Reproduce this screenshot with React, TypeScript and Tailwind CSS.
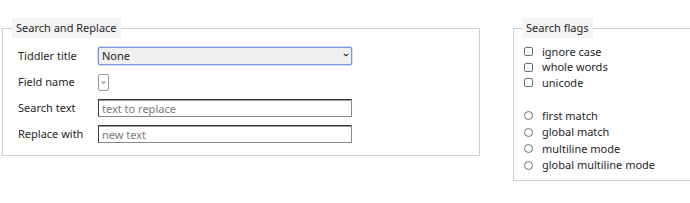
import React from "react";

const rows = ["first match", "global match", "multiline mode", "global multiline mode"];
const checks = ["ignore case", "whole words", "unicode"];

function Chevron({ className }: { className: string }) {
    return (
        <svg viewBox="0 0 8 5" className={className} fill="none">
            <path d="M1 1l3 2.6L7 1" stroke="#222" strokeWidth="1.4" />
        </svg>
    );
}

export default function App() {
    return (
        <div className="w-full h-[203px] overflow-hidden bg-white font-['Noto_Sans',sans-serif] text-[11px] text-[#262626]">
            <div className="flex items-start pt-[18px] pl-[2px]">
                {/* search and replace */}
                <fieldset className="w-[478px] shrink-0 border border-[#cfcfcf] pb-[8px]">
                    <legend className="ml-[9px] px-[4px] leading-5 bg-[#f4f4f4]">Search and Replace</legend>
                    <div className="grid grid-cols-[80px_254px] auto-rows-[26px] items-center pl-[15px] pt-[5px]">
                        <span>Tiddler title</span>
                        <div className="relative w-[254px] h-[18px]">
                            <select className="appearance-none w-full h-full pl-[3px] bg-[#efefef] border border-[#7396e0] rounded-[2px] outline-none shadow-[0_0_0_0.5px_#a9bff0]">
                                <option>None</option>
                            </select>
                            <Chevron className="absolute right-[3px] top-[6px] w-[6px] h-[4px] pointer-events-none" />
                        </div>

                        <span>Field name</span>
                        <div className="relative w-[11px] h-[17px]">
                            <select className="appearance-none w-full h-full bg-white border border-[#9a9a9a] rounded-[2px]"></select>
                            <Chevron className="absolute left-[3px] top-[7px] w-[5px] h-[3px] pointer-events-none" />
                        </div>

                        <span>Search text</span>
                        <input
                            type="text"
                            placeholder="text to replace"
                            className="w-[254px] h-[18px] px-[3px] border border-t-[#3a3a3a] border-l-[#3a3a3a] border-b-[#8a8a8a] border-r-[#8a8a8a] shadow-[inset_0_1px_0_#9a9a9a] placeholder:text-[#7a7a7a] outline-none"
                        />

                        <span>Replace with</span>
                        <input
                            type="text"
                            placeholder="new text"
                            className="w-[254px] h-[18px] px-[3px] border border-t-[#3a3a3a] border-l-[#3a3a3a] border-b-[#8a8a8a] border-r-[#8a8a8a] shadow-[inset_0_1px_0_#9a9a9a] placeholder:text-[#7a7a7a] outline-none"
                        />
                    </div>
                </fieldset>

                {/* flags */}
                <fieldset className="ml-[33px] w-[220px] shrink-0 border border-[#cfcfcf] pb-[6px]">
                    <legend className="ml-[8px] px-[4px] leading-5 bg-[#f4f4f4]">Search flags</legend>
                    <div className="flex flex-col pl-[10px] pt-[6px]">
                        {checks.map((c) => (
                            <label key={c} className="flex items-center h-[15.5px] gap-[9px]">
                                <input
                                    type="checkbox"
                                    className="appearance-none w-[9px] h-[9px] bg-white border border-[#6e6e6e] rounded-[2px]"
                                />
                                <span>{c}</span>
                            </label>
                        ))}
                        <div className="h-[17px]"></div>
                        {rows.map((r) => (
                            <label key={r} className="flex items-center h-[16.5px] gap-[9px]">
                                <input
                                    type="radio"
                                    name="mode"
                                    className="appearance-none w-[9px] h-[9px] bg-white border border-[#6e6e6e] rounded-full"
                                />
                                <span>{r}</span>
                            </label>
                        ))}
                    </div>
                </fieldset>
            </div>
        </div>
    );
}
